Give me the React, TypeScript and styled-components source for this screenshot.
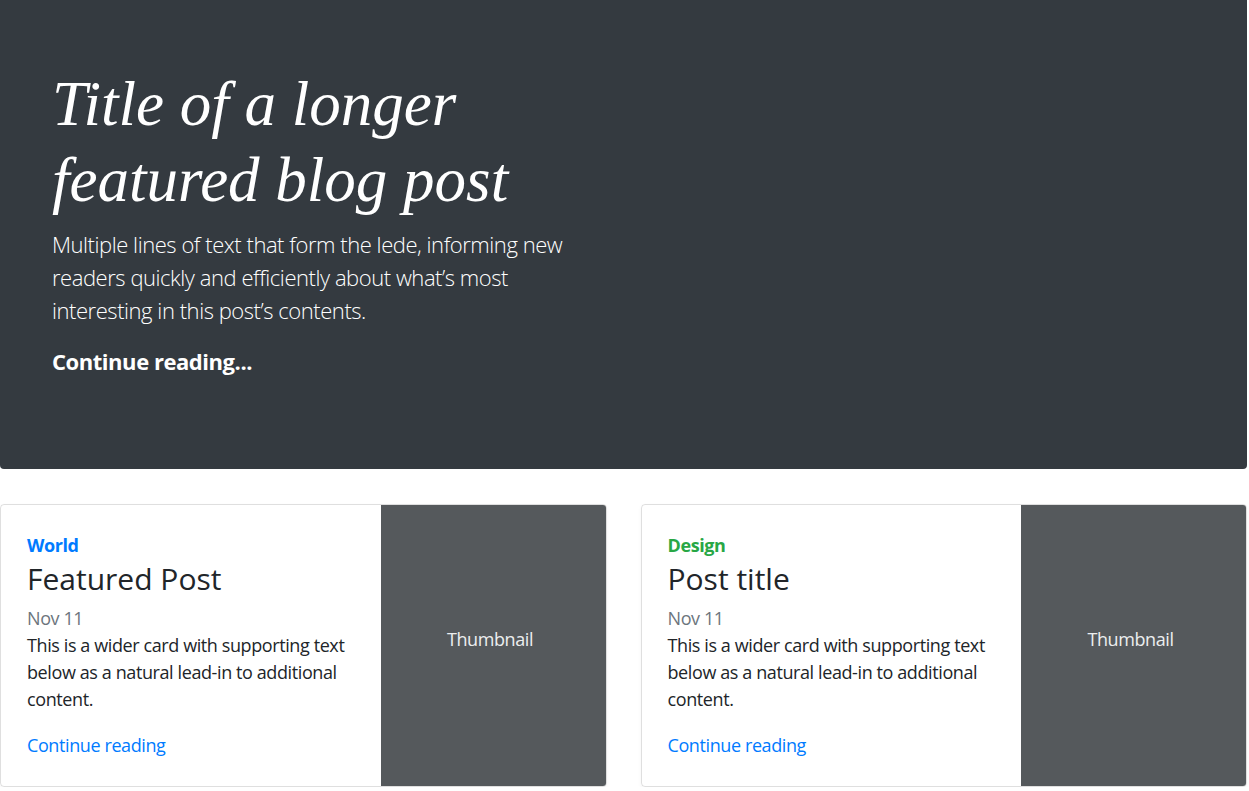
import React from "react";
import styled, { createGlobalStyle } from "styled-components";

const Global = createGlobalStyle`
  html, body { margin: 0; padding: 0; background: #fff; }
  body {
    font-family: "Open Sans", "Noto Sans", sans-serif;
    font-size: 18px;
    line-height: 1.5;
    letter-spacing: -0.4px;
    color: #212529;
  }
  * { box-sizing: border-box; }
`;

const Page = styled.div`
  width: 1247px;
`;

const Jumbotron = styled.section`
  background: #343a40;
  color: #fff;
  border-radius: 0 0 4px 4px;
  padding: 67px 52px 91px;
  margin-bottom: 35px;
`;

const HeroCol = styled.div`
  width: 540px;
`;

const HeroTitle = styled.h1`
  margin: 0 0 10px;
  font-family: "Liberation Serif", serif;
  font-style: italic;
  font-weight: 400;
  font-size: 63px;
  line-height: 1.2;
  letter-spacing: 0;
`;

const Lead = styled.p<{ $bold?: boolean }>`
  margin: 0;
  font-size: 22px;
  line-height: 33px;
  letter-spacing: -0.45px;
  font-weight: ${(p) => (p.$bold ? 700 : 300)};
  & + & { margin-top: 18px; }
`;

const HeroLink = styled.a`
  color: #fff;
  text-decoration: none;
`;

const CardRow = styled.div`
  display: grid;
  grid-template-columns: 1fr 1fr;
  column-gap: 34px;
`;

const Card = styled.article`
  display: flex;
  border: 1px solid rgba(0, 0, 0, 0.125);
  border-radius: 4px;
  overflow: hidden;
  height: 283px;
  box-shadow: 0 2px 4px rgba(0, 0, 0, 0.04);
`;

const CardBody = styled.div`
  flex: 1;
  display: flex;
  flex-direction: column;
  padding: 27px 26px 27px;
`;

const Category = styled.strong<{ $color: string }>`
  color: ${(p) => p.$color};
  font-weight: 700;
  margin-bottom: 2px;
`;

const CardTitle = styled.h3`
  margin: 0 0 8px;
  font-size: 30px;
  font-weight: 500;
  line-height: 1.2;
  letter-spacing: 0;
`;

const Date = styled.div`
  color: #6c757d;
`;

const CardText = styled.p`
  margin: 0 0 auto;
`;

const CardLink = styled.a`
  color: #007bff;
  text-decoration: none;
`;

const Thumb = styled.div`
  width: 225px;
  flex: none;
  background: #55595c;
  color: #eceeef;
  display: flex;
  align-items: center;
  justify-content: center;
  padding: 0 6px 12px 0;
`;

const posts = [
  { cat: "World", color: "#007bff", title: "Featured Post" },
  { cat: "Design", color: "#28a745", title: "Post title" },
];

export default function App() {
  return (
    <Page>
      <Global />
      <Jumbotron>
        <HeroCol>
          <HeroTitle>Title of a longer featured blog post</HeroTitle>
          <Lead>
            Multiple lines of text that form the lede, informing new readers quickly and
            efficiently about what’s most interesting in this post’s contents.
          </Lead>
          <Lead $bold>
            <HeroLink href="#">Continue reading...</HeroLink>
          </Lead>
        </HeroCol>
      </Jumbotron>
      <CardRow>
        {posts.map((p) => (
          <Card key={p.title}>
            <CardBody>
              <Category $color={p.color}>{p.cat}</Category>
              <CardTitle>{p.title}</CardTitle>
              <Date>Nov 11</Date>
              <CardText>
                This is a wider card with supporting text below as a natural lead-in to
                additional content.
              </CardText>
              <CardLink href="#">Continue reading</CardLink>
            </CardBody>
            <Thumb>Thumbnail</Thumb>
          </Card>
        ))}
      </CardRow>
    </Page>
  );
}
